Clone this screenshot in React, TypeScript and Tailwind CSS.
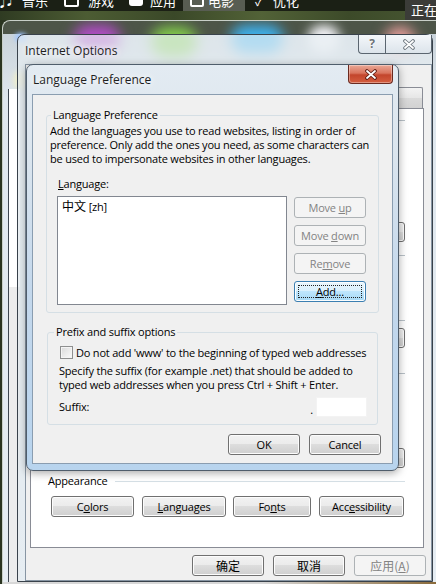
import React from "react";

type BtnProps = {
  children?: React.ReactNode;
  className?: string;
  disabled?: boolean;
  focused?: boolean;
};

function Btn({ children, className = "", disabled, focused }: BtnProps) {
  if (disabled) {
    return (
      <div
        className={
          "flex items-center justify-center rounded-[3px] border border-[#adb2b5] bg-[#f4f4f4] text-[#838383] " +
          className
        }
      >
        <span className="whitespace-pre">{children}</span>
      </div>
    );
  }
  if (focused) {
    return (
      <div
        className={
          "relative flex items-center justify-center rounded-[3px] border border-[#3c7fb1] bg-[linear-gradient(#eaf6fd_0%,#d9f0fc_49%,#bee6fd_50%,#a7d9f5_100%)] shadow-[inset_0_0_0_1px_#fbfdfe] text-black " +
          className
        }
      >
        <span className="absolute inset-[3px] border border-dotted border-[#222]" />
        <span className="whitespace-pre">{children}</span>
      </div>
    );
  }
  return (
    <div
      className={
        "flex items-center justify-center rounded-[3px] border border-[#707070] bg-[linear-gradient(#f2f2f2_0%,#ebebeb_49%,#dddddd_50%,#cfcfcf_100%)] shadow-[inset_0_0_0_1px_#fcfcfc] text-black " +
        className
      }
    >
      <span className="whitespace-pre">{children}</span>
    </div>
  );
}

function XGlyph({ dark, light }: { dark: string; light: string }) {
  return (
    <svg width="14" height="11" viewBox="0 0 14 11">
      <path d="M3 2 L11 9 M11 2 L3 9" stroke={dark} strokeWidth="3.6" strokeLinecap="round" fill="none" />
      <path d="M3 2 L11 9 M11 2 L3 9" stroke={light} strokeWidth="1.8" strokeLinecap="round" fill="none" />
    </svg>
  );
}

const menuText =
  "mt-[-7px] whitespace-nowrap text-[13px] leading-[16px] tracking-normal text-white font-['Noto_Sans_CJK_SC',sans-serif]";

export default function App() {
  return (
    <div className="relative w-[436px] h-[584px] overflow-hidden bg-[#2a3420] font-['Open_Sans','Noto_Sans_CJK_SC',sans-serif] text-[11px] leading-[14px] tracking-[-0.2px] text-black">
      {/* desktop top strip */}
      <div className="flex items-start h-[11px] bg-[#1b2015]">
        <span className="mt-[-7px] w-[8px] text-[13px] leading-[16px] text-white">♫</span>
        <span className={"ml-[14px] " + menuText}>音乐</span>
        <div className="ml-[16px] mt-[-3px] w-[15px] h-[10px] border-[2px] border-white rounded-[2px]" />
        <span className={"ml-[9px] " + menuText}>游戏</span>
        <div className="ml-[15px] mt-[-3px] w-[14px] h-[9px] bg-white rounded-b-[3px]" />
        <span className={"ml-[7px] " + menuText}>应用</span>
        <div className="ml-[7px] w-[62px] h-[11px] bg-[#585d52] flex items-start pl-[7px]">
          <div className="mt-[-3px] w-[14px] h-[10px] border-[2px] border-white rounded-[2px]" />
          <span className={"ml-[4px] " + menuText}>电影</span>
        </div>
        <span className="ml-[10px] mt-[-4px] w-[11px] text-white text-[12px] leading-[12px]">✓</span>
        <span className={"ml-[7px] " + menuText}>优化</span>
      </div>
      <div className="h-[9px] bg-[linear-gradient(90deg,#2f3b22,#4c5c33_20%,#3a4828_40%,#526237_60%,#3c4a29_80%,#485732)]" />

      {/* "正在" box */}
      <div className="absolute right-0 top-0 w-[31px] h-[20px] overflow-hidden bg-[#3b3c38] flex items-center pl-[6px] text-white text-[13px] tracking-normal whitespace-nowrap font-['Noto_Sans_CJK_SC',sans-serif]">
        正在
      </div>

      {/* outer window */}
      <div className="absolute left-[2px] top-[20px] w-[434px] h-[564px] rounded-tl-[8px] border-l border-t border-[#c8cfc8] bg-[linear-gradient(#4d5548_0px,#4d5548_13px,#c9d3da_13px,#dfe7ee_80px,#e6edf3_100%)] overflow-hidden">
        <div className="absolute left-[71px] top-[4px] w-[46px] h-[28px] rounded-full bg-[#b34cc9] blur-[7px]" />
        <div className="absolute left-[148px] top-[6px] w-[46px] h-[30px] rounded-full bg-[#86d24c] blur-[7px]" />
        <div className="absolute left-[228px] top-[4px] w-[52px] h-[28px] rounded-full bg-[#3db4f2] blur-[7px]" />
        <div className="absolute left-[305px] top-[4px] w-[32px] h-[28px] rounded-full bg-[#f6f6fa] blur-[6px]" />
        <div className="absolute left-[382px] top-[6px] w-[30px] h-[26px] rounded-full bg-[#eea2a0] blur-[7px]" />
        <div className="absolute left-[12px] top-[12px] w-[12px] h-[9px] rounded-full bg-[#9fc6ff] blur-[2px]" />
        <div className="absolute left-[11px] top-[50px] w-[12px] h-[18px] rounded-full bg-[#f2f0c8] blur-[3px]" />
        <div className="absolute left-[5px] top-[68px] w-[12px] bottom-0 border-l border-[#3d4650] bg-[linear-gradient(#ffffff_0%,#ffffff_40%,#ececec_40%)]" />
        <div className="absolute left-0 right-0 bottom-0 h-[2px] bg-[linear-gradient(90deg,#d8d8d8_60%,#8b6b3b)]" />
      </div>

      {/* Internet Options window */}
      <div className="absolute left-[17px] top-[34px] w-[416px] h-[548px] rounded-t-[7px] border border-[#39424b] bg-[#e6ecf1]/70 flex flex-col">
        <div className="relative h-[29px] shrink-0">
          <div className="pl-[7px] pt-[8px] text-[12px] leading-[16px] tracking-normal text-[#1e1e1e] [text-shadow:0_0_6px_#fff,0_0_10px_#fff]">
            Internet Options
          </div>
          <div className="absolute right-0 top-0 flex">
            <div className="w-[27px] h-[19px] flex items-center justify-center border border-t-0 border-r-0 border-[#5b6670] rounded-bl-[4px] bg-[linear-gradient(#f4f7fa,#dce4eb)]">
              <span className="text-[12px] leading-[12px] font-bold text-[#6d7378] [text-shadow:0_0_1px_#fff,0_0_2px_#fff]">?</span>
            </div>
            <div className="w-[47px] h-[19px] flex items-center justify-center border border-t-0 border-[#5b6670] rounded-br-[4px] bg-[linear-gradient(#f4f7fa,#dce4eb)]">
              <XGlyph dark="#6a737b" light="#ffffff" />
            </div>
          </div>
        </div>
        {/* client */}
        <div className="ml-[7px] w-[407px] flex-1 border border-[#8795a3] bg-[#f0f0f0] flex flex-col">
          <div className="h-[43px] shrink-0 flex items-end pl-[5px] pr-[9px]">
            {[0, 1, 2, 3, 4, 5, 6].map((t) => (
              <div
                key={t}
                className="flex-1 h-[21px] -mr-px border border-b-0 border-[#898c95] rounded-t-[2px] bg-[linear-gradient(#f3f3f3,#e6e6e6_50%,#dadada_50%,#d2d2d2)]"
              />
            ))}
          </div>
          <div className="ml-[4px] w-[394px] h-[440px] bg-white border border-[#898c95] flex flex-col pl-[17px] pr-[18px]">
            <div className="mt-[11px] h-px bg-[#b9c1c8]" />
            <Btn className="mt-[101px] self-end w-[75px] h-[20px]" />
            <div className="mt-[13px] h-px bg-[#b9c1c8]" />
            <div className="mt-[64px] h-px bg-[#b9c1c8]" />
            <Btn className="mt-[7px] self-end w-[75px] h-[20px]" />
            <div className="mt-[25px] h-px bg-[#b9c1c8]" />
            <Btn className="mt-[74px] self-end w-[75px] h-[20px]" />
            <div className="mt-[6px] h-[14px] flex items-center">
              <span>Appearance</span>
              <div className="ml-[7px] flex-1 h-px bg-[#d5dfe5]" />
            </div>
            <div className="mt-[8px] flex">
              <Btn className="ml-[3px] w-[83px] h-[21px]">
                C<span className="underline">o</span>lors
              </Btn>
              <Btn className="ml-[8px] w-[84px] h-[21px]">
                <span className="underline">L</span>anguages
              </Btn>
              <Btn className="ml-[7px] w-[78px] h-[21px]">
                Fo<span className="underline">n</span>ts
              </Btn>
              <Btn className="ml-[8px] w-[85px] h-[21px]">
                Acc<span className="underline">e</span>ssibility
              </Btn>
            </div>
          </div>
          <div className="mt-[7px] flex justify-end gap-[9px] pr-[5px] font-['Noto_Sans_CJK_SC',sans-serif] text-[12px] tracking-normal">
            <Btn className="w-[72px] h-[21px]">确定</Btn>
            <Btn className="w-[72px] h-[21px]">取消</Btn>
            <Btn disabled className="w-[72px] h-[21px] text-[#9a9a9a]">
              应用(<span className="underline">A</span>)
            </Btn>
          </div>
        </div>
      </div>

      {/* Language Preference dialog */}
      <div className="absolute left-[26px] top-[64px] w-[373px] h-[407px] rounded-[7px] border border-[#4f5d6b] bg-[linear-gradient(#e3ebf2_0%,#dbe5ee_22%,#c4d8ec_55%,#b8d4ee_100%)] flex flex-col shadow-[0_2px_8px_rgba(0,0,0,0.35)]">
        <div className="relative h-[29px] shrink-0">
          <div className="pl-[6px] pt-[7px] text-[12px] leading-[16px] tracking-normal text-[#1e1e1e] [text-shadow:0_0_6px_#fff,0_0_10px_#fff]">
            Language Preference
          </div>
          <div className="absolute right-[5px] top-0 w-[45px] h-[19px] flex items-center justify-center rounded-b-[4px] border border-t-0 border-[#6a2a20] bg-[linear-gradient(#eaa896_0%,#d9745d_45%,#c3452c_55%,#d45e40_100%)] shadow-[inset_0_0_0_1px_rgba(255,255,255,0.35)]">
            <XGlyph dark="#5a1a10" light="#ffffff" />
          </div>
        </div>
        <div className="ml-[5px] w-[361px] h-[370px] border border-[#8a9db0] bg-[#f0f0f0] flex flex-col">
          {/* group 1 */}
          <fieldset className="ml-[13px] mt-[12px] w-[333px] min-w-0 border border-[#d5dfe5] rounded-[3px] pb-[7px]">
            <legend className="ml-[4px] px-[2px] leading-[16px]">Language Preference</legend>
            <div className="pl-[3px] flex flex-col">
              <p className="mt-[1px] whitespace-nowrap">
                Add the languages you use to read websites, listing in order of
                <br />
                preference. Only add the ones you need, as some characters can
                <br />
                be used to impersonate websites in other languages.
              </p>
              <div className="mt-[11px] ml-[8px]">
                <span className="underline">L</span>anguage:
              </div>
              <div className="mt-[5px] ml-[7px] flex gap-[7px]">
                <div className="w-[230px] h-[109px] border border-[#828790] bg-white pl-[4px] pt-[2px]">
                  <span className="text-[12px] tracking-normal font-['Noto_Sans_CJK_SC',sans-serif]">中文</span> [zh]
                </div>
                <div className="mt-[1px] flex flex-col gap-[7px]">
                  <Btn disabled className="w-[72px] h-[21px]">
                    Move <span className="underline">u</span>p
                  </Btn>
                  <Btn disabled className="w-[72px] h-[21px]">
                    Move <span className="underline">d</span>own
                  </Btn>
                  <Btn disabled className="w-[72px] h-[21px]">
                    Re<span className="underline">m</span>ove
                  </Btn>
                  <Btn focused className="w-[72px] h-[21px]">
                    <span className="underline">A</span>dd...
                  </Btn>
                </div>
              </div>
            </div>
          </fieldset>
          {/* group 2 */}
          <fieldset className="ml-[14px] mt-[11px] w-[331px] min-w-0 border border-[#d5dfe5] rounded-[3px] pb-[7px]">
            <legend className="ml-[6px] px-[2px] leading-[16px]">Prefix and suffix options</legend>
            <div className="pl-[12px] pr-[10px] flex flex-col">
              <div className="mt-[6px] h-[13px] flex items-center gap-[3px]">
                <div className="w-[13px] h-[13px] shrink-0 border border-[#8e8f8f] bg-[linear-gradient(135deg,#d9d9d9,#fbfbfb)] shadow-[inset_0_0_0_1px_#f4f4f4]" />
                <span className="whitespace-nowrap">Do not add 'www' to the beginning of typed web addresses</span>
              </div>
              <p className="mt-[5px] -ml-[1px] whitespace-nowrap">
                Specify the suffix (for example .net) that should be added to
                <br />
                typed web addresses when you press Ctrl + Shift + Enter.
              </p>
              <div className="mt-[5px] -ml-[1px] h-[20px] flex items-center">
                <span className="flex-1">Suffix:</span>
                <span className="mt-[6px]">.</span>
                <div className="ml-[3px] w-[51px] h-[20px] bg-white border border-[#f3f3f3]" />
              </div>
            </div>
          </fieldset>
          <div className="mt-[9px] flex justify-end gap-[9px] pr-[11px]">
            <Btn className="w-[72px] h-[21px]">OK</Btn>
            <Btn className="w-[72px] h-[21px]">Cancel</Btn>
          </div>
        </div>
      </div>
    </div>
  );
}
